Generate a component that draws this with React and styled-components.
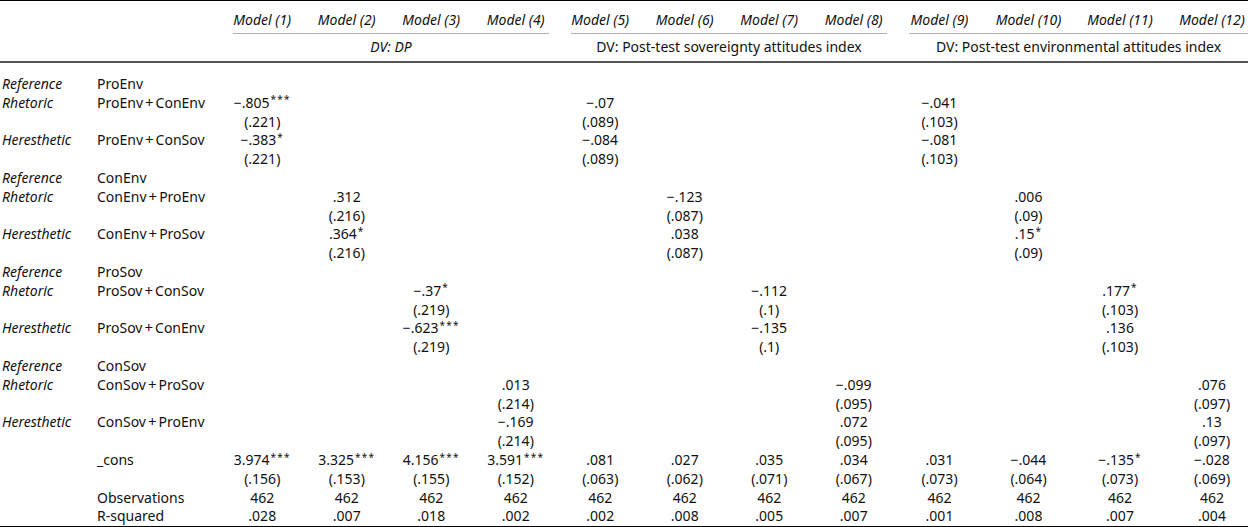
import React from 'react';
import styled, { createGlobalStyle } from 'styled-components';

const GlobalStyle = createGlobalStyle`
  body {
    margin: 0;
    background: #ffffff;
    font-family: 'Noto Sans', 'DejaVu Sans', sans-serif;
    color: #111111;
  }
`;

const Wrapper = styled.div`
  width: 1248px;
  overflow: hidden;
`;

const Table = styled.table`
  width: 1248px;
  table-layout: fixed;
  border-collapse: collapse;
  border-top: 1px solid #000000;
  font-size: 14px;
  line-height: 18.8px;

  th,
  td {
    padding: 0;
    height: 18.8px;
  }
`;

const ModelHead = styled.th`
  font-weight: 400;
  font-style: italic;
  text-align: center;
  white-space: nowrap;
  && {
    padding: 10px 0 3px ${(p) => (p.$last ? '10px' : '0')};
  }
`;

const GroupCell = styled.th`
  font-weight: 400;
`;

const GroupRule = styled.div`
  border-top: 1px solid #b0b0b0;
  margin: 0 ${(p) => (p.$last ? '0' : '9px')} 0 13px;
  padding: 4px 0 4.5px;
  text-align: center;
  white-space: nowrap;
  font-style: ${(p) => (p.$italic ? 'italic' : 'normal')};
`;

const HeadRow = styled.tr`
  border-bottom: ${(p) => (p.$thick ? '2px solid #555555' : 'none')};
`;

const BodyRow = styled.tr`
  border-bottom: ${(p) => (p.$end ? '1.5px solid #000000' : 'none')};
  && td {
    padding-top: ${(p) => (p.$first ? '12px' : '0')};
  }
`;

const StyleLabel = styled.td`
  font-style: italic;
  white-space: nowrap;
  && {
    padding-left: 2px;
  }
`;

const TermLabel = styled.td`
  white-space: nowrap;
`;

const Plus = styled.span`
  font-size: 15px;
  line-height: 0;
  margin: 0 2px;
`;

const Cell = styled.td`
  text-align: center;
  white-space: nowrap;
  && {
    padding-left: ${(p) => (p.$last ? '10px' : '0')};
  }
`;

const Stars = styled.sup`
  font-size: 10px;
  letter-spacing: 1.2px;
  line-height: 0;
  vertical-align: 0.45em;
  margin-left: 1px;
`;

const widths = [97, 123, 84.5, 84.5, 84.5, 84.5, 84.5, 84.5, 84.5, 84.5, 87, 91, 92, 82];

const groups = [
  { label: 'DV: DP', italic: true },
  { label: 'DV: Post-test sovereignty attitudes index' },
  { label: 'DV: Post-test environmental attitudes index', last: true },
];

// each block: reference term, two treatment terms, and the model columns they fill
const blocks = [
  {
    ref: 'ProEnv',
    rhet: ['ProEnv', 'ConEnv'],
    here: ['ProEnv', 'ConSov'],
    cols: {
      0: [['−.805', '***'], '(.221)', ['−.383', '*'], '(.221)'],
      4: [['−.07'], '(.089)', ['−.084'], '(.089)'],
      8: [['−.041'], '(.103)', ['−.081'], '(.103)'],
    },
  },
  {
    ref: 'ConEnv',
    rhet: ['ConEnv', 'ProEnv'],
    here: ['ConEnv', 'ProSov'],
    cols: {
      1: [['.312'], '(.216)', ['.364', '*'], '(.216)'],
      5: [['−.123'], '(.087)', ['.038'], '(.087)'],
      9: [['.006'], '(.09)', ['.15', '*'], '(.09)'],
    },
  },
  {
    ref: 'ProSov',
    rhet: ['ProSov', 'ConSov'],
    here: ['ProSov', 'ConEnv'],
    cols: {
      2: [['−.37', '*'], '(.219)', ['−.623', '***'], '(.219)'],
      6: [['−.112'], '(.1)', ['−.135'], '(.1)'],
      10: [['.177', '*'], '(.103)', ['.136'], '(.103)'],
    },
  },
  {
    ref: 'ConSov',
    rhet: ['ConSov', 'ProSov'],
    here: ['ConSov', 'ProEnv'],
    cols: {
      3: [['.013'], '(.214)', ['−.169'], '(.214)'],
      7: [['−.099'], '(.095)', ['.072'], '(.095)'],
      11: [['.076'], '(.097)', ['.13'], '(.097)'],
    },
  },
];

const cons = [
  ['3.974', '***', '(.156)'],
  ['3.325', '***', '(.153)'],
  ['4.156', '***', '(.155)'],
  ['3.591', '***', '(.152)'],
  ['.081', '', '(.063)'],
  ['.027', '', '(.062)'],
  ['.035', '', '(.071)'],
  ['.034', '', '(.067)'],
  ['.031', '', '(.073)'],
  ['−.044', '', '(.064)'],
  ['−.135', '*', '(.073)'],
  ['−.028', '', '(.069)'],
];

const rsq = ['.028', '.007', '.018', '.002', '.002', '.008', '.005', '.007', '.001', '.008', '.007', '.004'];

const models = Array.from({ length: 12 }, (_, i) => i);

const Value = ({ v }) => {
  if (!v) return null;
  if (typeof v === 'string') return v;
  return (
    <>
      {v[0]}
      {v[1] && <Stars>{v[1]}</Stars>}
    </>
  );
};

const Term = ({ t }) => {
  if (!t) return null;
  if (typeof t === 'string') return t;
  return (
    <>
      {t[0]}
      <Plus>+</Plus>
      {t[1]}
    </>
  );
};

const buildRows = () => {
  const rows = [];
  blocks.forEach((b) => {
    rows.push({ style: 'Reference', term: b.ref, idx: null });
    rows.push({ style: 'Rhetoric', term: b.rhet, idx: 0, cols: b.cols });
    rows.push({ style: '', term: '', idx: 1, cols: b.cols });
    rows.push({ style: 'Heresthetic', term: b.here, idx: 2, cols: b.cols });
    rows.push({ style: '', term: '', idx: 3, cols: b.cols });
  });
  return rows;
};

const App = () => {
  const rows = buildRows();

  return (
    <Wrapper>
      <GlobalStyle />
      <Table>
        <colgroup>
          {widths.map((w, i) => (
            <col key={i} style={{ width: w }} />
          ))}
        </colgroup>
        <thead>
          <HeadRow>
            <th />
            <th />
            {models.map((m) => (
              <ModelHead key={m} $last={m === 11}>
                Model ({m + 1})
              </ModelHead>
            ))}
          </HeadRow>
          <HeadRow $thick>
            <th />
            <th />
            {groups.map((g) => (
              <GroupCell key={g.label} colSpan={4}>
                <GroupRule $italic={g.italic} $last={g.last}>
                  {g.label}
                </GroupRule>
              </GroupCell>
            ))}
          </HeadRow>
        </thead>
        <tbody>
          {rows.map((r, ri) => (
            <BodyRow key={ri} $first={ri === 0}>
              <StyleLabel>{r.style}</StyleLabel>
              <TermLabel>
                <Term t={r.term} />
              </TermLabel>
              {models.map((m) => (
                <Cell key={m} $last={m === 11}>
                  {r.idx !== null && r.cols[m] ? <Value v={r.cols[m][r.idx]} /> : null}
                </Cell>
              ))}
            </BodyRow>
          ))}
          <BodyRow>
            <StyleLabel />
            <TermLabel>_cons</TermLabel>
            {cons.map((c, m) => (
              <Cell key={m} $last={m === 11}>
                <Value v={[c[0], c[1]]} />
              </Cell>
            ))}
          </BodyRow>
          <BodyRow>
            <StyleLabel />
            <TermLabel />
            {cons.map((c, m) => (
              <Cell key={m} $last={m === 11}>
                {c[2]}
              </Cell>
            ))}
          </BodyRow>
          <BodyRow>
            <StyleLabel />
            <TermLabel>Observations</TermLabel>
            {models.map((m) => (
              <Cell key={m} $last={m === 11}>
                462
              </Cell>
            ))}
          </BodyRow>
          <BodyRow $end>
            <StyleLabel />
            <TermLabel>R-squared</TermLabel>
            {rsq.map((v, m) => (
              <Cell key={m} $last={m === 11}>
                {v}
              </Cell>
            ))}
          </BodyRow>
        </tbody>
      </Table>
    </Wrapper>
  );
};

export default App;
